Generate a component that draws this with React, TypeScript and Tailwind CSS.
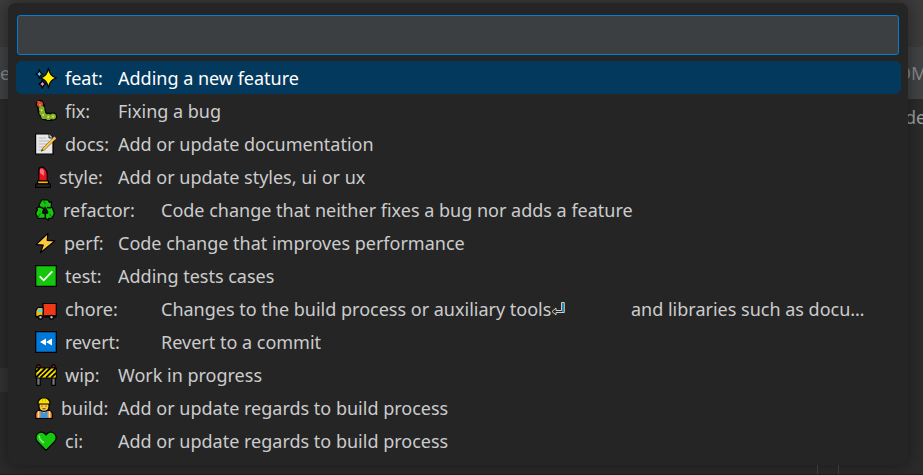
import { useState } from "react";
import type { ReactNode } from "react";

interface CommitType {
    name: string;
    description: string;
    more?: string;
    wide?: boolean;
    icon: ReactNode;
}

const STAR = "M0-10Q1.2-1.6 8 0Q1.2 1.6 0 10Q-1.2 1.6-8 0Q-1.2-1.6 0-10Z";

function Icon({ width = 22, children }: { width?: number; children: ReactNode }) {
    return (
        <svg
            width={width}
            height={22}
            viewBox={`0 0 ${width} 22`}
            className="shrink-0"
            aria-hidden="true"
            stroke="#000"
            strokeWidth={1.2}
            strokeLinejoin="round"
        >
            {children}
        </svg>
    );
}

const commitTypes: CommitType[] = [
    {
        name: "feat:",
        description: "Adding a new feature",
        icon: (
            <Icon>
                <path d="M4.3 2.6Q4.9 6.4 8.1 7Q4.9 7.6 4.3 11.4Q3.7 7.6.6 7Q3.7 6.4 4.3 2.6Z" fill="#50d0f5" />
                <path d="M7.4 12.8Q8 16.2 11 17Q8 17.8 7.4 21.2Q6.8 17.8 3.8 17Q6.8 16.2 7.4 12.8Z" fill="#f38fc0" />
                <path d={STAR} transform="translate(13.4 11)" fill="#fff100" />
            </Icon>
        ),
    },
    {
        name: "fix:",
        description: "Fixing a bug",
        icon: (
            <Icon>
                <path d="M6 6.5 7 12 9 16 14 17 18 16.5" fill="none" strokeWidth="8" strokeLinecap="round" />
                <circle cx="5" cy="4.3" r="3.7" fill="#f03a17" />
                <g fill="#7fae2c" stroke="none">
                    <circle cx="6.7" cy="9" r="2.9" />
                    <circle cx="7.3" cy="12.7" r="3" />
                    <circle cx="9" cy="16" r="3.1" />
                    <circle cx="13.5" cy="17" r="3.1" />
                    <circle cx="18" cy="16.500" r="3" />
                </g>
                <g fill="#e3ea4a" stroke="none">
                    <circle cx="6.7" cy="10.3" r="1" />
                    <circle cx="8.2" cy="15" r="1" />
                    <circle cx="13.3" cy="17" r="1.1" />
                    <circle cx="18" cy="16.5" r="1.1" />
                </g>
                <path d="M2.500 1.200 4.500 2.200" stroke="#f7894a" />
                <circle cx="5" cy="4.8" r="1" fill="#58bff0" stroke="none" />
            </Icon>
        ),
    },
    {
        name: "docs:",
        description: "Add or update documentation",
        icon: (
            <Icon>
                <path d="M.6.8H14L18 4.8V21.2H.6Z" fill="#e8e8e8" />
                <path d="M14 .8V5H18" fill="#c8c8c8" strokeWidth=".8" />
                <path d="M3.5 5H11M3.5 8H14M3.5 11H12M3.5 14H9M3.5 17H7" stroke="#b9b9b9" strokeWidth="1" />
                <path d="M6.2 18.3 7.6 15.3 19.4 3.5 21.3 5.4 9.4 17Z" fill="#ffc83d" strokeWidth=".4" />
                <path d="M18.2 4.7 19.4 3.5 21.3 5.4 20.2 6.5Z" fill="#f7a0a8" stroke="none" />
                <path d="M6.2 18.3 7.2 16.2 8.3 17.3Z" fill="#222" stroke="none" />
            </Icon>
        ),
    },
    {
        name: "style:",
        description: "Add or update styles, ui or ux",
        icon: (
            <Icon width={16}>
                <path d="M3.8 16V4.5C3.8.5 7 .3 9.5 2.3 11.5 4 12.2 6 12.2 8V16Z" fill="#e81224" />
                <path d="M5 4.2C5.7 2 7.700 2.600 8.700 4.300 9.500 5.800 9.400 8.500 8.600 9.700L5 7Z" fill="#f4707c" stroke="none" />
                <path d="M2.6 14.8H13.4V18H2.6Z" fill="#ffb900" />
                <path d="M.7 17.8H15.3V21.4H.7Z" fill="#252525" />
            </Icon>
        ),
    },
    {
        name: "refactor:",
        description: "Code change that neither fixes a bug nor adds a feature",
        wide: true,
        icon: (
            <Icon width={20}>
                <path
                    d="M6.800.800H12.800L14.500 3.500 16.500 2.800 16.200 8.500 17.500 9 19.400 14.500 17 19.300H13.500V21.200L10.500 19.300H3.200L.600 14.500 2.500 10.500 1.300 9.400 4.500 7.500 4.300 5.500Z"
                    fill="#16c60c"
                />
                <path d="M10 7.200 11.500 9.200 13.500 13.200 12.500 15H7.700L6.800 13.200 8.300 9.600Z" fill="#101010" stroke="none" />
                <path d="M4.300 7.600 8.800 9.600M15.900 8.700 12 8.600M10.300 19.500V15" fill="none" strokeWidth="1.500" />
                <path d="M8 1.200 10.500 5M17 18.500 14.500 15M3 18.500 5.500 14.500" fill="none" stroke="#0b7d0b" />
            </Icon>
        ),
    },
    {
        name: "perf:",
        description: "Code change that improves performance",
        icon: (
            <Icon width={21}>
                <path d="M13 1.3 1 12.6 8.3 13.1 5.5 20.8 19.8 8.9 12.2 8.3Z" fill="#ffc83d" />
            </Icon>
        ),
    },
    {
        name: "test:",
        description: "Adding tests cases",
        icon: (
            <Icon>
                <path d="M.7.7H21.3V21.3H.7Z" fill="#16c60c" />
                <path d="M4.700 11.300 8.700 15.300 17.300 6.300" fill="none" stroke="#fff" strokeWidth="1.8" strokeLinejoin="miter" />
            </Icon>
        ),
    },
    {
        name: "chore:",
        description: "Changes to the build process or auxiliary tools",
        more: "and libraries such as docu…",
        wide: true,
        icon: (
            <Icon>
                <path d="M8 5.500H21.300V17.800H8Z" fill="#f03a17" />
                <path d="M.7 18.500V13L2.600 9.500H8V18.500Z" fill="#ffb900" />
                <path d="M2.300 13.500 3.500 11H7.400V14.300H2.300Z" fill="#50d0f5" stroke="none" />
                <path d="M.7 18.700H21.300" strokeWidth="1.800" />
                <circle cx="5.500" cy="19.200" r="1.900" fill="#bbb" />
                <circle cx="16.500" cy="19.200" r="1.900" fill="#bbb" />
            </Icon>
        ),
    },
    {
        name: "revert:",
        description: "Revert to a commit",
        wide: true,
        icon: (
            <Icon>
                <path d="M.7.7H21.3V21.3H.7Z" fill="#0078d7" />
                <path d="M11 7.5V14.5L5 11ZM17 7.5V14.5L11 11Z" fill="#fff" stroke="none" />
            </Icon>
        ),
    },
    {
        name: "wip:",
        description: "Work in progress",
        icon: (
            <Icon>
                <path d="M1.7 12H5.2V21.3H1.7ZM16.8 12H20.3V21.3H16.8Z" fill="#777" />
                <circle cx="3.5" cy="2.5" r="1.7" fill="#b5202c" />
                <circle cx="18.5" cy="2.5" r="1.7" fill="#b5202c" />
                <path d="M.7 3.8H21.3V14H.7Z" fill="#fce100" />
                <path d="M1 8 5 4M1 13.5 10.5 4M5.500 13.700 15.500 4M11 13.700 20.800 4M16.300 13.700 21 9" strokeWidth="1.800" />
            </Icon>
        ),
    },
    {
        name: "build:",
        description: "Add or update regards to build process",
        icon: (
            <Icon width={18}>
                <path d="M.7 21.3V17C.7 14.500 2.500 13.500 5 13.500H13C15.500 13.500 17.300 14.500 17.300 17V21.300Z" fill="#f7894a" />
                <path d="M5.500 13.500H12.500V21H5.500Z" fill="#3a96dd" stroke="none" />
                <path d="M6.500 13H11.500L9 16.500Z" fill="#ffc83d" stroke="none" />
                <path d="M3.500 14V21M14.500 14V21" stroke="#ffe08a" strokeWidth="1.3" />
                <path d="M4 6H14V9.500C14 12.700 12 14.300 9 14.300S4 12.700 4 9.500Z" fill="#ffc83d" />
                <path d="M2.800 7C3 3 5.500.8 9 .8S15 3 15.200 7Z" fill="#fce100" />
                <path d="M7.500 1.500V4.500M10.500 1.500V4.500" stroke="#c9a800" strokeWidth=".8" />
                <path d="M7 8.500V9.600M11 8.500V9.600M7.500 11.700H10.500" strokeWidth="1" stroke="#5b4423" />
            </Icon>
        ),
    },
    {
        name: "ci:",
        description: "Add or update regards to build process",
        icon: (
            <Icon>
                <path
                    d="M11 20.300 2.500 11.700C-.3 8.500.8 3.800 4.300 2.500 7 1.600 9.600 2.600 11 4.900 12.400 2.600 15 1.600 17.700 2.500 21.200 3.800 22.300 8.500 19.500 11.700Z"
                    fill="#16c60c"
                />
                <path d="M4.200 6C4.200 8.500 5.500 10.300 8.500 12.500" fill="none" stroke="#86e882" strokeWidth="1.6" strokeLinecap="round" />
            </Icon>
        ),
    },
];

function ReturnMark() {
    return (
        <svg width="14" height="16" viewBox="0 0 14 16" className="shrink-0" fill="none" aria-hidden="true">
            <path d="M10.500 1.500H13.300V11.500H5V14L1 10.500 5 7V9.500H10.500Z" stroke="#ccc" />
            <path d="M12 2V11" stroke="#2a9fd0" strokeWidth="1.500" />
        </svg>
    );
}

function CommitRow({ type, selected, onSelect }: { type: CommitType; selected: boolean; onSelect: () => void }) {
    return (
        <li>
            <button
                type="button"
                onClick={onSelect}
                className={`flex h-[33px] w-full items-center rounded-md pl-[19px] pr-8 text-left whitespace-nowrap ${
                    selected ? "bg-[#04395e] text-white" : "text-[#cccccc]"
                }`}
            >
                <span className={`flex shrink-0 items-center gap-2 ${type.wide ? "w-[126px]" : "w-[83px]"}`}>
                    {type.icon}
                    {type.name}
                </span>
                {type.more ? (
                    <>
                        <span className="flex w-[470px] shrink-0 items-center">
                            {type.description}
                            <ReturnMark />
                        </span>
                        <span>{type.more}</span>
                    </>
                ) : (
                    <span className="truncate">{type.description}</span>
                )}
            </button>
        </li>
    );
}

export default function App() {
    const [query, setQuery] = useState("");
    const [selected, setSelected] = useState(0);

    return (
        <div className="relative flex min-h-screen flex-col overflow-hidden bg-[#2b2b2b] font-['Noto_Sans','Open_Sans',sans-serif] text-[18px] leading-6 text-[#8a8a8a]">
            {/* Editor behind the palette */}
            <div className="h-[47px] bg-[#3c3c3c]" />
            <div className="flex h-[52px] items-center justify-between bg-[#414345]">
                <span className="w-2 overflow-hidden">e</span>
                <span className="w-[26px] overflow-hidden">OM</span>
            </div>
            <div className="flex h-9 items-center justify-end">
                <span className="w-[18px] overflow-hidden text-[#a0a0a0]">de</span>
            </div>
            <div className="mt-[233px] h-6 w-2 bg-[#343434]" />
            <div className="flex grow items-end justify-end border-b border-[#1f1f1f] pr-[84px]">
                <div className="h-[9px] w-[22px] border-x border-[#444444]" />
            </div>

            {/* Command palette */}
            <div className="absolute top-[3px] right-[15px] left-2 rounded-lg bg-[#252526] pt-3 pb-2 shadow-[0_0_16px_2px_rgba(0,0,0,0.36)]">
                <div className="px-[9px]">
                    <input
                        type="text"
                        aria-label="Commit type"
                        value={query}
                        onChange={(e) => setQuery(e.target.value)}
                        className="block h-10 w-full rounded-[3px] border border-[#007fd4] bg-[#3c3f41] px-2 text-[#cccccc] outline-none"
                    />
                </div>
                <ul className="mt-[6px] pr-[7px] pl-2">
                    {commitTypes.map((type, i) => (
                        <CommitRow key={type.name} type={type} selected={i === selected} onSelect={() => setSelected(i)} />
                    ))}
                </ul>
            </div>
        </div>
    );
}
